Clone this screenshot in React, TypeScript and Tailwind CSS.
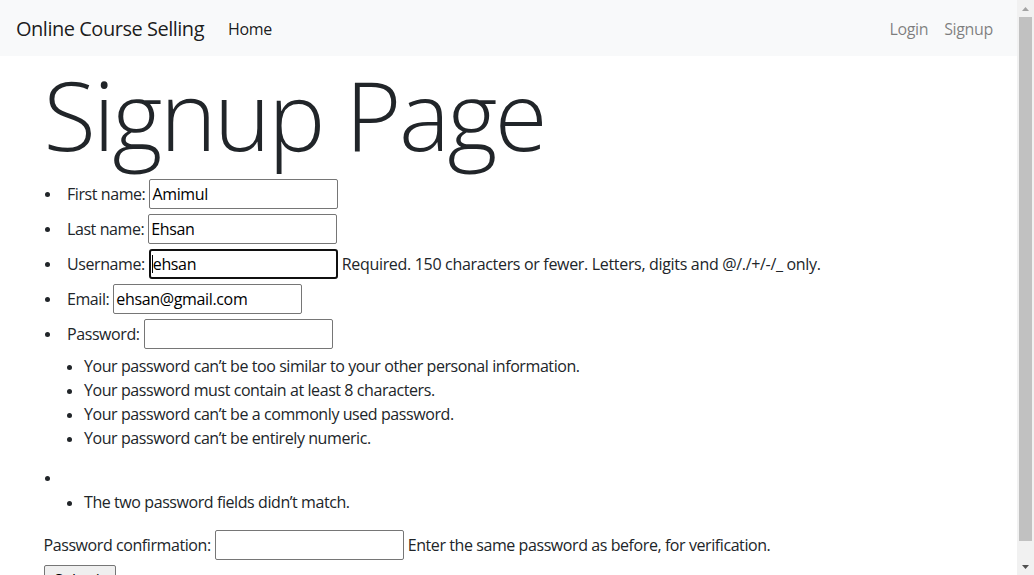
import React from 'react';

const helpPassword = [
  "Your password can’t be too similar to your other personal information.",
  "Your password must contain at least 8 characters.",
  "Your password can’t be a commonly used password.",
  "Your password can’t be entirely numeric.",
];

function Dot() {
  return <span className="block h-[5px] w-[5px] rounded-full bg-[#212529]" />;
}

function Field({ value = '', focused = false }: { value?: string; focused?: boolean }) {
  if (focused) {
    return (
      <span className="relative block">
        <input
          readOnly
          value={value}
          className="block h-[30px] w-[189px] rounded-[3px] border-2 border-[#101010] bg-white px-[2px] text-[16px] tracking-[-0.35px] text-black outline-none"
        />
        {/* text caret */}
        <span className="absolute left-[3px] top-[6px] h-[18px] w-px bg-black" />
      </span>
    );
  }
  return (
    <input
      readOnly
      value={value}
      className="block h-[30px] w-[189px] rounded-[2px] border border-[#767676] bg-white px-[2px] text-[16px] tracking-[-0.35px] text-black outline-none"
    />
  );
}

function Item({ children }: { children: React.ReactNode }) {
  return (
    <li className="flex h-[35px] items-start">
      <span className="flex h-[30px] w-[23.5px] shrink-0 items-center pl-px">
        <Dot />
      </span>
      <div className="flex items-start gap-1">{children}</div>
    </li>
  );
}

function SubList({ items }: { items: string[] }) {
  return (
    <ul className="mb-4 pl-[23.5px]">
      {items.map((t, i) => (
        <li key={i} className="flex h-6 items-start">
          <span className="w-[17px] shrink-0 pt-[11px]">
            <Dot />
          </span>
          <span className="leading-6">{t}</span>
        </li>
      ))}
    </ul>
  );
}

function Scrollbar() {
  return (
    <div className="flex w-[17px] shrink-0 flex-col bg-[#f1f1f1]">
      <div className="flex h-[17px] items-center justify-center">
        <svg width="7" height="4" viewBox="0 0 7 4">
          <path d="M0 4 L3.5 0 L7 4 Z" fill="#a3a3a3" />
        </svg>
      </div>
      <div className="mx-[2px] h-[524px] bg-[#c1c1c1]" />
      <div className="flex-1" />
      <div className="flex h-[17px] items-center justify-center">
        <svg width="7" height="4" viewBox="0 0 7 4">
          <path d="M0 0 L7 0 L3.5 4 Z" fill="#505050" />
        </svg>
      </div>
    </div>
  );
}

export default function App() {
  return (
    <div className="flex h-screen w-full overflow-hidden bg-white font-['Open_Sans','Noto_Sans',sans-serif] text-[16px] tracking-[-0.42px] text-[#212529]">
      <div className="flex min-w-0 flex-1 flex-col">
        <nav className="flex h-[56px] shrink-0 items-center bg-[#f8f9fa] px-4 pt-px">
          <span className="mr-4 text-[20px] leading-[30px] tracking-[-0.48px] text-black/90">Online Course Selling</span>
          <a className="px-2 leading-6 tracking-[-0.35px] text-black/90">Home</a>
          <div className="ml-auto flex tracking-[-0.35px]">
            <a className="px-2 leading-6 text-black/50">Login</a>
            <a className="px-2 leading-6 text-black/50">Signup</a>
          </div>
        </nav>

        <main className="mx-auto w-full max-w-[960px] px-[15px]">
          <h1 className="mb-2 text-[96px] font-light leading-[115px] tracking-[-2.5px]">Signup Page</h1>

          <ul>
            <Item>
              <span className="leading-[30px]">First name:</span>
              <Field value="Amimul" />
            </Item>
            <Item>
              <span className="leading-[30px]">Last name:</span>
              <Field value="Ehsan" />
            </Item>
            <Item>
              <span className="leading-[30px]">Username:</span>
              <Field value="ehsan" focused />
              <span className="leading-[30px] tracking-[-0.32px]">Required. 150 characters or fewer. Letters, digits and @/./+/-/_ only.</span>
            </Item>
            <Item>
              <span className="leading-[30px]">Email:</span>
              <Field value="ehsan@gmail.com" />
            </Item>
            <li>
              <div className="flex h-[35px] items-start">
                <span className="flex h-[30px] w-[23.5px] shrink-0 items-center pl-px">
                  <Dot />
                </span>
                <div className="flex items-start gap-1">
                  <span className="leading-[30px]">Password:</span>
                  <Field />
                </div>
              </div>
              <SubList items={helpPassword} />
            </li>
            <li>
              <div className="flex h-6 items-center pl-px">
                <Dot />
              </div>
              <SubList items={["The two password fields didn’t match."]} />
            </li>
          </ul>

          <div className="flex h-[35px] items-start gap-1">
            <span className="leading-[30px]">Password confirmation:</span>
            <Field />
            <span className="leading-[30px]">Enter the same password as before, for verification.</span>
          </div>

          <button className="h-[30px] w-[72px] rounded-[2px] border border-[#767676] bg-[#efefef] text-black">
            Submit
          </button>
        </main>
      </div>
      <Scrollbar />
    </div>
  );
}
